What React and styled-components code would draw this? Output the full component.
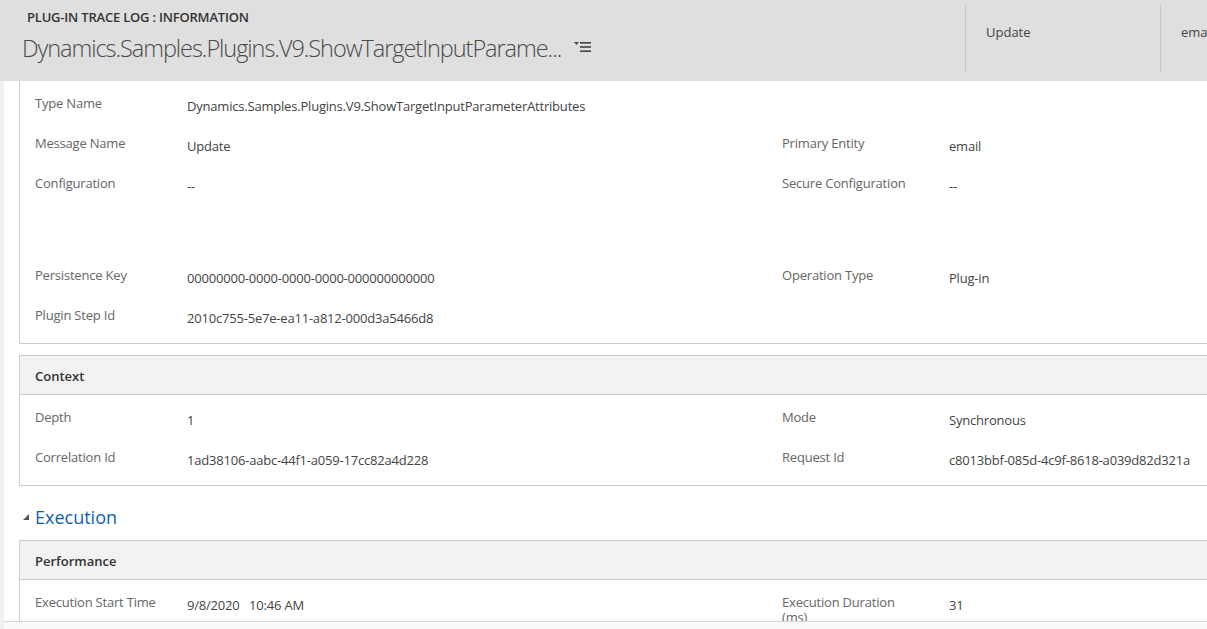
import React from "react";
import styled, { createGlobalStyle } from "styled-components";

const GlobalStyle = createGlobalStyle`
  html, body { margin: 0; padding: 0; background: #ffffff; }
  body { overflow: hidden; font-family: "Open Sans", "Noto Sans", sans-serif; }
  * { box-sizing: border-box; }
`;

const Page = styled.div`
  width: 1207px;
  height: 629px;
  display: flex;
  flex-direction: column;
  overflow: hidden;
`;

const Header = styled.header`
  height: 81px;
  flex: none;
  background: #dfdfdf;
  display: flex;
  overflow: hidden;
`;

const TitleBlock = styled.div`
  width: 965px;
  flex: none;
  padding: 8px 0 0 27px;
`;

const EntityName = styled.div`
  font-size: 13px;
  font-weight: 600;
  color: #333333;
  line-height: 18px;
  letter-spacing: -0.2px;
`;

const RecordTitle = styled.div`
  display: flex;
  align-items: center;
  margin: 6px 0 0 -5px;
  gap: 13px;
`;

const RecordName = styled.h1`
  margin: 0;
  font-family: "Open Sans", "Noto Sans", sans-serif;
  font-size: 23.5px;
  font-weight: 300;
  color: #4a4a4a;
  line-height: 32px;
  letter-spacing: -1.05px;
  white-space: nowrap;
`;

const Tiles = styled.div`
  display: flex;
  flex: none;
  padding: 5px 0 8px;
`;

const Tile = styled.div`
  width: 195px;
  border-left: 1px solid #c6c6c6;
  padding: 18px 0 0 20px;
  font-size: 13px;
  color: #444444;
  white-space: nowrap;
  overflow: hidden;
`;

const Body = styled.div`
  flex: 1;
  display: flex;
  min-height: 0;
`;

const Rail = styled.div`
  width: 4px;
  flex: none;
  background: #f1f1f1;
`;

const Main = styled.div`
  flex: 1;
  display: flex;
  flex-direction: column;
  min-width: 0;
`;

const Scroll = styled.div`
  flex: 1;
  overflow: hidden;
  padding-left: 15px;
`;

const Footer = styled.div`
  height: 8px;
  flex: none;
  border-top: 1px solid #d6d6d6;
  background: #fafafa;
`;

const Section = styled.section`
  width: 1260px;
  border: 1px solid #cccccc;
  border-top: ${(p) => (p.$open ? "none" : "1px solid #cccccc")};
  padding-top: 10px;
  margin-bottom: ${(p) => p.$mb || 0}px;
`;

const SectionHead = styled.div`
  height: 39px;
  margin-top: -10px;
  margin-bottom: 10px;
  background: #f2f2f2;
  border-bottom: 1px solid #cccccc;
  padding: 1px 15px 0;
  display: flex;
  align-items: center;
  font-size: 13px;
  font-weight: 600;
  color: #333333;
`;

const Row = styled.div`
  display: grid;
  grid-template-columns: 747px 1fr;
  height: ${(p) => p.$h || 40}px;
  padding-left: 15px;
`;

const Field = styled.div`
  display: flex;
  align-items: flex-start;
`;

const Label = styled.div`
  width: ${(p) => p.$w}px;
  padding-right: ${(p) => p.$pr}px;
  flex: none;
  font-size: 13px;
  line-height: 15px;
  padding-top: 5px;
  color: #666666;
  letter-spacing: -0.2px;
`;

const Value = styled.div`
  font-size: 13px;
  line-height: 18px;
  padding-top: 6px;
  color: #444444;
  white-space: pre;
  letter-spacing: -0.2px;
`;

const Group = styled.div`
  display: flex;
  align-items: center;
  height: 54px;
  padding: 8px 0 0 4px;
  gap: 6px;
`;

const GroupTitle = styled.h2`
  margin: 0;
  font-size: 18px;
  font-weight: 400;
  color: #1160b7;
  line-height: 24px;
`;

const MenuIcon = () => (
  <svg width="18" height="12" viewBox="0 0 18 12" fill="#444">
    <polygon points="0,0 5,0 2.5,3" />
    <rect x="6" y="0" width="11" height="1.6" />
    <rect x="6" y="4.2" width="11" height="1.6" />
    <rect x="6" y="8.4" width="11" height="1.6" />
  </svg>
);

const Caret = () => (
  <svg width="6" height="6" viewBox="0 0 6 6" fill="#555">
    <polygon points="6,0 6,6 0,6" />
  </svg>
);

const F = ({ label, value, right }) => (
  <Field>
    <Label $w={right ? 167 : 152} $pr={right ? 35 : 25}>
      {label}
    </Label>
    <Value>{value}</Value>
  </Field>
);

export default function App() {
  return (
    <Page>
      <GlobalStyle />
      <Header>
        <TitleBlock>
          <EntityName>PLUG-IN TRACE LOG : INFORMATION</EntityName>
          <RecordTitle>
            <RecordName>Dynamics.Samples.Plugins.V9.ShowTargetInputParame...</RecordName>
            <MenuIcon />
          </RecordTitle>
        </TitleBlock>
        <Tiles>
          <Tile>Update</Tile>
          <Tile>email</Tile>
        </Tiles>
      </Header>
      <Body>
        <Rail />
        <Main>
          <Scroll>
            <Section $open $mb={11}>
              <Row>
                <F label="Type Name" value="Dynamics.Samples.Plugins.V9.ShowTargetInputParameterAttributes" />
                <div />
              </Row>
              <Row>
                <F label="Message Name" value="Update" />
                <F label="Primary Entity" value="email" right />
              </Row>
              <Row $h={92}>
                <F label="Configuration" value="--" />
                <F label="Secure Configuration" value="--" right />
              </Row>
              <Row>
                <F label="Persistence Key" value="00000000-0000-0000-0000-000000000000" />
                <F label="Operation Type" value="Plug-in" right />
              </Row>
              <Row>
                <F label="Plugin Step Id" value="2010c755-5e7e-ea11-a812-000d3a5466d8" />
                <div />
              </Row>
            </Section>
            <Section>
              <SectionHead>Context</SectionHead>
              <Row>
                <F label="Depth" value="1" />
                <F label="Mode" value="Synchronous" right />
              </Row>
              <Row>
                <F label="Correlation Id" value="1ad38106-aabc-44f1-a059-17cc82a4d228" />
                <F label="Request Id" value="c8013bbf-085d-4c9f-8618-a039d82d321a" right />
              </Row>
            </Section>
            <Group>
              <Caret />
              <GroupTitle>Execution</GroupTitle>
            </Group>
            <Section>
              <SectionHead>Performance</SectionHead>
              <Row>
                <F label="Execution Start Time" value="9/8/2020   10:46 AM" />
                <F label="Execution Duration (ms)" value="31" right />
              </Row>
            </Section>
          </Scroll>
          <Footer />
        </Main>
      </Body>
    </Page>
  );
}
